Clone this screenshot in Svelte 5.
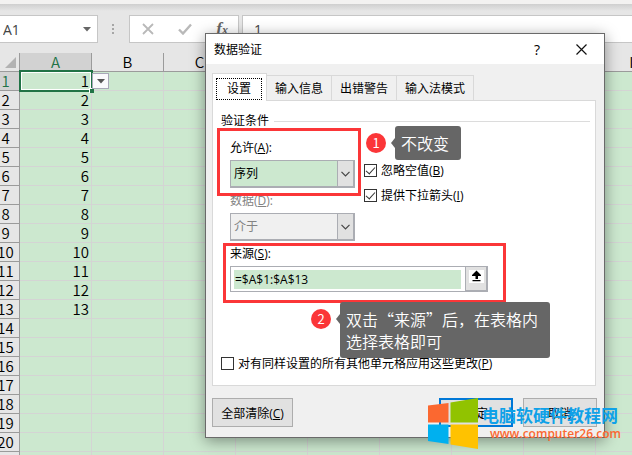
<script lang="ts">
	const columns = ['A', 'B', 'C', 'D', 'E', 'F', 'G', 'H', 'I', 'J'];
	const rows = Array.from({ length: 21 }, (_, i) => i + 1);
	const filled = 13;

	const tabs = ['设置', '输入信息', '出错警告', '输入法模式'];
	let activeTab = $state('设置');
	let allow = $state('序列');
	let compare = $state('介于');
	let source = $state('=$A$1:$A$13');
	let ignoreBlank = $state(true);
	let showDropdown = $state(true);
	let applyAll = $state(false);
</script>

{#snippet chevron()}
	<span class="chevron">
		<svg width="9" height="6" viewBox="0 0 9 6"><path d="M0.5 0.8 4.5 4.8 8.5 0.8" fill="none" stroke="#444" stroke-width="1.2" /></svg>
	</span>
{/snippet}

<div class="app">
	<div class="ribbon-edge"></div>

	<div class="formula-bar">
		<div class="name-box">
			<input type="text" value="A1" aria-label="Name box" />
			<svg width="8" height="5" viewBox="0 0 8 5"><path d="M0 0h8L4 4.5z" fill="#666" /></svg>
		</div>
		<svg class="grip" width="3" height="11" viewBox="0 0 3 11" fill="#a6a6a6">
			<path d="M0 0h2v2H0zM0 4h2v2H0zM0 8h2v2H0z" />
		</svg>
		<div class="formula-tools">
			<button aria-label="Cancel">
				<svg width="12" height="12" viewBox="0 0 12 12"><path d="M1 1 11 11M11 1 1 11" stroke="#b9b9b9" stroke-width="1.8" /></svg>
			</button>
			<button aria-label="Enter">
				<svg width="14" height="12" viewBox="0 0 14 12"><path d="M1 6.5 5 10.5 13 1.5" fill="none" stroke="#b9b9b9" stroke-width="2.4" /></svg>
			</button>
			<button class="fx" aria-label="Insert function"><i>f</i><i class="sub">x</i></button>
		</div>
		<input class="formula" type="text" value="1" aria-label="Formula" />
	</div>

	<table class="sheet">
		<thead>
			<tr>
				<th class="corner">
					<svg width="11" height="11" viewBox="0 0 11 11"><path d="M11 0v11H0z" fill="#b2b2b2" /></svg>
				</th>
				{#each columns as column, i}
					<th class="col-head" class:current={i === 0}>{column}</th>
				{/each}
			</tr>
		</thead>
		<tbody>
			{#each rows as row}
				<tr>
					<th class="row-head" class:current={row === 1}>{row}</th>
					{#each columns as _, i}
						{#if row === 1 && i === 0}
							<td class="selected">
								1
								<span class="handle"></span>
								<button class="cell-drop" aria-label="Open list">
									<svg width="8" height="5" viewBox="0 0 8 5"><path d="M0 0h8L4 4.5z" fill="#555" /></svg>
								</button>
							</td>
						{:else}
							<td>{i === 0 && row <= filled ? row : ''}</td>
						{/if}
					{/each}
				</tr>
			{/each}
		</tbody>
	</table>

	<div class="dialog" role="dialog" aria-labelledby="dialog-title">
		<header>
			<span id="dialog-title">数据验证</span>
			<button class="help" aria-label="Help">?</button>
			<button class="close" aria-label="Close">
				<svg width="11" height="11" viewBox="0 0 11 11"><path d="M0.5 0.5 10.5 10.5M10.5 0.5 0.5 10.5" stroke="#111" stroke-width="1.2" /></svg>
			</button>
		</header>

		<div class="tabs" role="tablist">
			{#each tabs as tab}
				<button role="tab" class:active={tab === activeTab} aria-selected={tab === activeTab} onclick={() => (activeTab = tab)}>
					<span>{tab}</span>
				</button>
			{/each}
		</div>

		<div class="panel">
			<div class="section"><span>验证条件</span></div>

			<div class="criteria">
				<div class="columns">
					<div class="stack narrow">
						<label for="allow">允许(<u>A</u>):</label>
						<div class="select">
							<select id="allow" bind:value={allow}>
								<option>序列</option>
								<option>整数</option>
							</select>
							{@render chevron()}
						</div>
						<label class="off" for="compare">数据(<u>D</u>):</label>
						<div class="select off">
							<select id="compare" bind:value={compare} disabled>
								<option>介于</option>
							</select>
							{@render chevron()}
						</div>
					</div>
					<div class="checks">
						<label class="check"><input type="checkbox" bind:checked={ignoreBlank} /><span>忽略空值(<u>B</u>)</span></label>
						<label class="check"><input type="checkbox" bind:checked={showDropdown} /><span>提供下拉箭头(<u>I</u>)</span></label>
					</div>
				</div>
				<div class="stack">
					<label for="source">来源(<u>S</u>):</label>
					<div class="source">
						<input id="source" type="text" bind:value={source} />
						<button aria-label="Select range">
							<svg width="15" height="13" viewBox="0 0 15 13">
								<path d="M0 0h15v13H0z" fill="#fff" />
								<path d="M7.5 0.5 12 5v1H9V9H6.500V6H3V5zM3.500 10h8v1.200h-8z" fill="#000" />
							</svg>
						</button>
					</div>
				</div>
			</div>

			<label class="check apply"><input type="checkbox" bind:checked={applyAll} /><span>对有同样设置的所有其他单元格应用这些更改(<u>P</u>)</span></label>
		</div>

		<footer>
			<button class="clear">全部清除(<u>C</u>)</button>
			<button class="primary">确定</button>
			<button>取消</button>
		</footer>

		<div class="frame frame-allow"></div>
		<div class="frame frame-source"></div>
		<div class="note note-allow">
			<span class="badge">1</span>
			<p>不改变</p>
		</div>
		<div class="note note-source">
			<span class="badge">2</span>
			<p>双击“来源”后，在表格内<br />选择表格即可</p>
		</div>
	</div>

	<div class="watermark">
		<svg width="50" height="51" viewBox="0 0 50 51">
			<path d="M0 7.5 20.5 5v19.5H0z" fill="#fb6830" />
			<path d="M22.5 4.6 50 0v24.5H22.5z" fill="#91c300" />
			<path d="M0 26.5h20.5V46L0 43z" fill="#00b0ef" />
			<path d="M22.5 26.5H50V51l-27.5-4.6z" fill="#ffc200" />
		</svg>
		<div class="site">
			<strong>电脑软硬件教程网</strong>
			<a href="http://www.computer26.com">www.computer26.com</a>
		</div>
	</div>
</div>

<style>
	:global(body) {
		margin: 0;
	}

	.app {
		position: relative;
		height: 100vh;
		overflow: hidden;
		background: #e6e6e6;
		font-family: 'Open Sans', 'Noto Sans CJK SC', sans-serif;
		font-size: 12px;
		color: #000;
	}

	button,
	input,
	select {
		font: inherit;
		color: inherit;
		box-sizing: border-box;
		margin: 0;
		padding: 0;
		border: 0;
		border-radius: 0;
		background: none;
		outline: none;
	}

	.ribbon-edge {
		height: 15px;
		background: linear-gradient(#f3f2f1 4px, #cfcfcf 4px, #e6e6e6 11px);
	}

	.formula-bar {
		display: flex;
		align-items: center;
		height: 28px;
		margin-bottom: 10px;
		color: #444;
	}

	.name-box,
	.formula-tools,
	.formula {
		display: flex;
		align-items: center;
		height: 28px;
		box-sizing: border-box;
		border: 1px solid #c6c6c6;
		background: #fff;
	}

	.name-box {
		width: 98px;
		border-left: 0;
		padding: 0 6px 0 3px;
		font-size: 14px;
	}

	.name-box input {
		flex: 1;
		min-width: 0;
	}

	.grip {
		margin: 0 14px;
	}

	.formula-tools {
		width: 110px;
		padding: 0 10px 0 12px;
		justify-content: space-between;
	}

	.formula-tools svg {
		display: block;
	}

	.fx {
		font-family: 'Liberation Serif', serif;
		font-size: 17px;
		font-weight: bold;
		line-height: 20px;
		color: #666;
	}

	.fx .sub {
		font-size: 12px;
	}

	.formula {
		flex: 1;
		min-width: 0;
		margin-left: 3px;
		padding-left: 11px;
		border-right: 0;
		font-size: 14px;
	}

	.sheet {
		width: max-content;
		margin-left: -8px;
		border-spacing: 0;
		font-family: 'Noto Sans CJK SC', sans-serif;
		font-size: 15px;
		line-height: 18px;
	}

	.sheet th,
	.sheet td {
		box-sizing: border-box;
		height: 19px;
		padding: 0;
		font-weight: 350;
		border-right: 1px solid #d4d4d4;
		border-bottom: 1px solid #d4d4d4;
	}

	.sheet td {
		padding-right: 2px;
		text-align: right;
		background: #cce8cf;
	}

	.sheet .corner,
	.sheet .row-head {
		width: 28px;
		border-color: #9b9b9b;
	}

	.sheet .corner {
		padding-right: 3px;
	}

	.corner svg {
		display: block;
		margin-left: auto;
	}

	.sheet .col-head {
		width: 72px;
		min-width: 72px;
		border-color: #9b9b9b;
	}

	.sheet .current {
		background: #d2d2d2;
		color: #217346;
	}

	.sheet .selected {
		position: relative;
	}

	.selected::before {
		content: '';
		position: absolute;
		inset: -2px -2px -2px -1px;
		border: 2px solid #217346;
		box-shadow: inset 0 0 0 1px #fff;
	}

	.handle {
		position: absolute;
		right: -3px;
		bottom: -3px;
		width: 4px;
		height: 4px;
		border: solid #fff;
		border-width: 1px 0 0 1px;
		background: #217346;
	}

	.cell-drop {
		position: absolute;
		left: 72px;
		top: 1px;
		width: 17px;
		height: 16px;
		display: flex;
		align-items: center;
		justify-content: center;
		border: 1px solid #a8a8b8;
		background: #fafafc;
	}

	.dialog {
		position: absolute;
		left: 205px;
		top: 33px;
		width: 398px;
		border: 1px solid #6a6a6a;
		background: #f0f0f0;
		box-shadow: 0 3px 14px rgba(0, 0, 0, 0.4);
	}

	.dialog header {
		display: flex;
		align-items: center;
		height: 30px;
		padding: 0 17px 0 8px;
		background: #fff;
	}

	.help {
		margin-left: auto;
		font-size: 14px;
	}

	.close {
		margin-left: 36px;
	}

	.close svg {
		display: block;
	}

	.tabs {
		display: flex;
		align-items: flex-end;
		padding: 9px 6px 0;
	}

	.tabs button {
		height: 25px;
		padding: 0 8px;
		border: 1px solid #d9d9d9;
		border-width: 1px 1px 0 0;
	}

	.tabs .active {
		height: 28px;
		padding: 3px 4px 1px 3px;
		margin-bottom: -1px;
		border-left-width: 1px;
		background: #fff;
		z-index: 1;
	}

	.tabs .active span {
		display: block;
		padding: 1px 10px;
		line-height: 18px;
		border: 1px dotted #000;
	}

	.panel {
		margin: 0 8px 0 6px;
		padding: 11px 5px 15px 8px;
		border: 1px solid #d9d9d9;
		background: #fff;
	}

	.section {
		display: flex;
		align-items: center;
		gap: 5px;
		line-height: 18px;
	}

	.section::after {
		content: '';
		flex: 1;
		height: 1px;
		background: #dcdcdc;
	}

	.criteria {
		display: flex;
		flex-direction: column;
		gap: 4px;
		padding: 9px 0 0 9px;
	}

	.columns {
		display: flex;
		gap: 9px;
	}

	.stack {
		display: flex;
		flex-direction: column;
		gap: 4px;
	}

	.stack.narrow {
		width: 125px;
	}

	.stack label {
		line-height: 17px;
	}

	.off {
		color: #838383;
	}

	.select {
		display: grid;
		grid-template-columns: 1fr 16px;
		height: 28px;
		box-sizing: border-box;
		border: 1px solid #abadb3;
		border-right-width: 2px;
		border-bottom-width: 2px;
		background: #cce8cf;
	}

	.select.off {
		background: #f0f0f0;
	}

	.select select {
		grid-area: 1 / 1 / 2 / 3;
		appearance: none;
		padding-left: 3px;
		opacity: 1;
	}

	.chevron {
		grid-area: 1 / 2;
		display: flex;
		align-items: center;
		justify-content: center;
		border-left: 1px solid #abadb3;
		background: #e1e1e1;
		pointer-events: none;
	}

	.checks {
		display: flex;
		flex-direction: column;
		gap: 12px;
		padding-top: 25px;
	}

	.check {
		display: flex;
		align-items: center;
		gap: 4px;
		height: 13px;
		line-height: 13px;
		white-space: nowrap;
	}

	.check input {
		appearance: none;
		display: grid;
		place-items: center;
		flex: none;
		width: 13px;
		height: 13px;
		border: 1px solid #333;
		background: #fff;
	}

	.check input:checked::after {
		content: '';
		width: 5px;
		height: 9px;
		margin-bottom: 3px;
		box-sizing: border-box;
		border: solid #333;
		border-width: 0 1px 1px 0;
		transform: rotate(42deg);
	}

	.source {
		display: flex;
		width: 258px;
		height: 26px;
		box-sizing: border-box;
		border: 1px solid #abadb3;
	}

	.source input {
		flex: 1;
		min-width: 0;
		margin: 3px 4px 2px 3px;
		padding-left: 1px;
		background: #cce8cf;
	}

	.source button {
		display: flex;
		justify-content: center;
		width: 22px;
		padding-top: 3px;
		border: 1px solid #abadb3;
		border-width: 0 1px 1px 1px;
		background: #e1e1e1;
	}

	.apply {
		margin-top: 65px;
	}

	footer {
		display: flex;
		gap: 10px;
		padding: 12px 7px 10px 6px;
	}

	footer button {
		width: 74px;
		height: 29px;
		border: 1px solid #adadad;
		background: #e1e1e1;
	}

	footer .clear {
		width: 81px;
		margin-right: auto;
	}

	footer .primary {
		border: 2px solid #0078d7;
	}

	/* tutorial annotations, drawn over the dialog */
	.frame {
		position: absolute;
		box-sizing: border-box;
		border: 3px solid #fb3638;
		pointer-events: none;
	}

	.frame-allow {
		left: 11px;
		top: 94px;
		width: 144px;
		height: 68px;
	}

	.frame-source {
		left: 17px;
		top: 209px;
		width: 283px;
		height: 60px;
	}

	.note {
		position: absolute;
		display: flex;
		gap: 9px;
		font-family: 'Noto Sans CJK SC', sans-serif;
		color: #fff;
	}

	.note-allow {
		left: 160px;
		top: 92px;
	}

	.note-source {
		left: 105px;
		top: 268px;
	}

	.badge {
		width: 20px;
		height: 20px;
		margin-top: 7px;
		border-radius: 50%;
		background: #fb3638;
		font-size: 13px;
		line-height: 20px;
		text-align: center;
	}

	.note p {
		position: relative;
		margin: 0;
		padding: 6px 12px 6px 6px;
		border-radius: 3px;
		background: #666;
		font-size: 16px;
		font-weight: 350;
		line-height: 22px;
		white-space: nowrap;
	}

	.note p::before {
		content: '';
		position: absolute;
		right: 100%;
		top: 12px;
		border: solid transparent;
		border-width: 5px 4px 5px 0;
		border-right-color: #666;
	}

	.watermark {
		position: absolute;
		left: 428px;
		top: 398px;
		display: flex;
		gap: 4px;
	}

	.site {
		display: flex;
		flex-direction: column;
		padding-top: 5px;
		white-space: nowrap;
	}

	.site strong {
		font-family: 'Noto Sans CJK SC', sans-serif;
		font-size: 17px;
		line-height: 23px;
		color: #0fa1e8;
	}

	.site a {
		padding-left: 8px;
		font-size: 12px;
		font-weight: 600;
		line-height: 16px;
		text-decoration: none;
		color: #fb6830;
	}
</style>
